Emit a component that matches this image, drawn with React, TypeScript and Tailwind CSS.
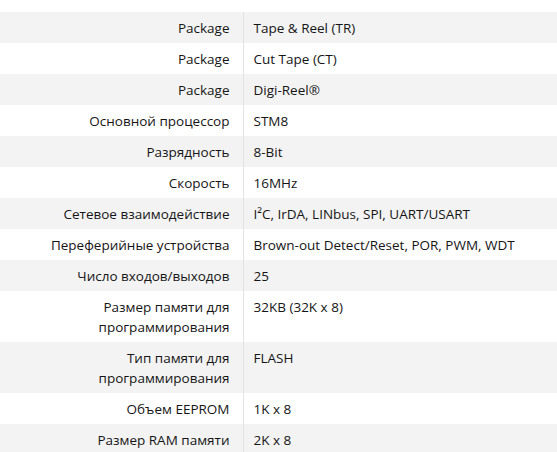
const specs: [string, string][] = [
  ["Package", "Tape & Reel (TR)"],
  ["Package", "Cut Tape (CT)"],
  ["Package", "Digi-Reel®"],
  ["Основной процессор", "STM8"],
  ["Разрядность", "8-Bit"],
  ["Скорость", "16MHz"],
  ["Сетевое взаимодействие", "I²C, IrDA, LINbus, SPI, UART/USART"],
  ["Переферийные устройства", "Brown-out Detect/Reset, POR, PWM, WDT"],
  ["Число входов/выходов", "25"],
  ["Размер памяти для программирования", "32KB (32K x 8)"],
  ["Тип памяти для программирования", "FLASH"],
  ["Объем EEPROM", "1K x 8"],
  ["Размер RAM памяти", "2K x 8"],
];

export default function App() {
  return (
    <div className="min-h-screen bg-white pt-3 font-['Open_Sans',sans-serif] text-[13.5px] leading-5 text-[#151515]">
      <table className="w-full border-collapse">
        <tbody>
          {specs.map(([label, value], i) => (
            <tr key={i} className={i % 2 === 0 ? "bg-[#f3f3f3]" : "bg-white"}>
              <td className="w-[243px] border-r border-[#e3e3e3] py-[5.5px] pl-3 pr-[13px] text-right align-top">
                {label}
              </td>
              <td className="py-[5.5px] pl-[10px] pr-3 align-top">{value}</td>
            </tr>
          ))}
        </tbody>
      </table>
    </div>
  );
}
